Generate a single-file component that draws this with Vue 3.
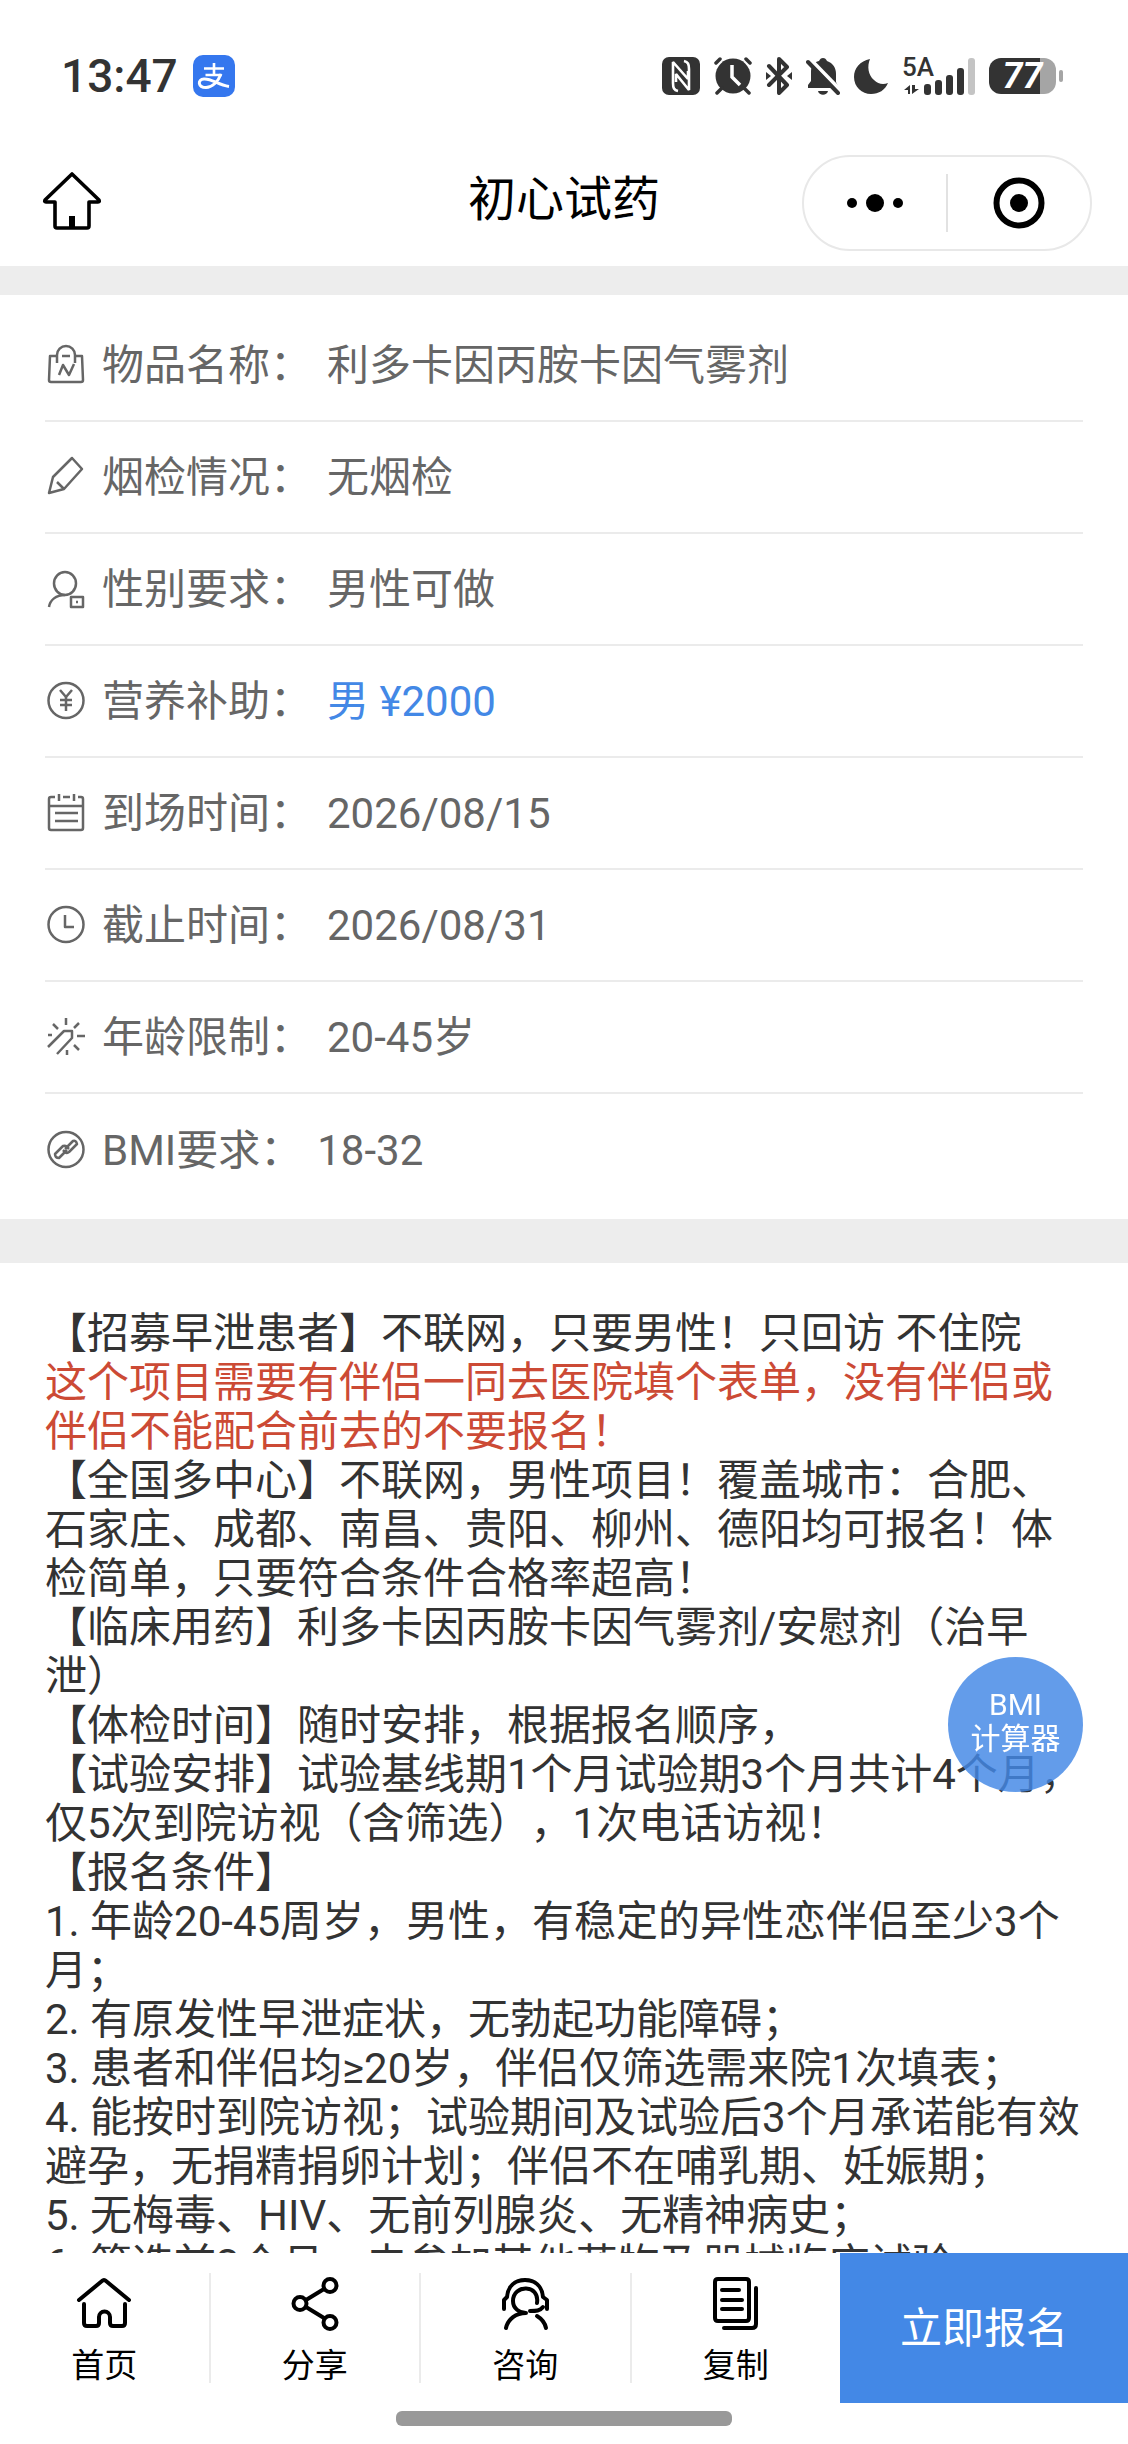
<template>
  <div class="page">
    <header class="top">
      <div class="status-bar">
        <div class="status-left">
          <span class="time">13:47</span>
          <svg class="app-badge" viewBox="0 0 42 42" aria-hidden="true">
            <rect width="42" height="42" rx="10" fill="#3577ee" />
            <g fill="none" stroke="#fff" stroke-width="2.6" stroke-linecap="butt">
              <path d="M11 13.500h20M21 8v12M12.500 20h16" />
              <path d="M28 19c-3 8-9 13.500-15 13.500-8 0-9-8-2-8.500 8-.5 14 6 25 7.500" stroke-width="3" />
            </g>
          </svg>
        </div>
        <div class="status-right">
          <svg width="38" height="38" viewBox="0 0 38 38" aria-hidden="true">
            <rect width="38" height="38" rx="7" fill="#333" />
            <g fill="none" stroke="#fff" stroke-width="2.600" stroke-linejoin="bevel">
              <path d="M16 34c-4-1-5-3-5-8V5l15 17v-8" />
              <path d="M22 4c4 1 5 3 5 8v21L14 17v8" />
            </g>
          </svg>
          <svg width="38" height="38" viewBox="0 0 38 38" aria-hidden="true">
            <circle cx="19" cy="19" r="17.500" fill="#333" />
            <g fill="none" stroke="#333" stroke-width="3.500" stroke-linecap="round">
              <path d="M2 6l4-4M36 6l-4-4M3 36l5-5M35 36l-5-5" />
            </g>
            <path d="M18 8v12l8 8" fill="none" stroke="#fff" stroke-width="3.500" />
          </svg>
          <svg width="26" height="38" viewBox="0 0 26 38" aria-hidden="true">
            <path d="M3 9l18 19-8 8V2l8 8L3 28" fill="none" stroke="#333" stroke-width="4" stroke-linejoin="round" stroke-linecap="round" />
            <path d="M0 15l5 4-5 4zM26 15l-5 4 5 4z" fill="#333" />
          </svg>
          <svg width="34" height="38" viewBox="0 0 34 38" aria-hidden="true">
            <path d="M17 1c2 0 3 1 4 3 6 2 9 7 9 13v8l3 6H2v-3l3-4v-9C5 9 8 5 13 4c1-2 2-3 4-3zM12 34h10c-1 5-9 5-10 0z" fill="#333" />
            <path d="M3 1l33 34" stroke="#fff" stroke-width="4" />
            <path d="M2 5l30 31" stroke="#333" stroke-width="4" stroke-linecap="round" />
          </svg>
          <svg width="34" height="38" viewBox="0 0 34 38" aria-hidden="true">
            <path d="M16 2C6 4 0 11 0 20c0 10 8 17 17 17 8 0 14-4 17-11-5 2-10 1-14-3-6-5-7-14-4-21z" fill="#333" />
          </svg>
          <svg class="signal" width="73" height="38" viewBox="0 0 73 38">
            <text x="0" y="19">5A</text>
            <path d="M2 33l6-5v9h-2v-4zM10 28v9l7-5h-4v-4z" fill="#333" />
            <g fill="#333">
              <rect x="22" y="27" width="7" height="11" rx="3" />
              <rect x="33" y="23" width="7" height="15" rx="3" />
              <rect x="44" y="18" width="7" height="20" rx="3" />
              <rect x="55" y="11" width="7" height="27" rx="3" />
            </g>
            <rect x="66" y="1" width="7" height="37" rx="3" fill="#c4c4c4" />
          </svg>
          <div class="battery">
            <span class="battery-body">77</span>
            <span class="battery-cap"></span>
          </div>
        </div>
      </div>

      <div class="nav-bar">
        <a class="nav-home" href="#" aria-label="首页">
          <svg width="72" height="72" viewBox="-4 -4 72 72" aria-hidden="true">
            <path d="M32 6L5 32q-1 2 1 2h9v24q0 2 2 2h30q2 0 2-2V34h9q2 0 1-2z" fill="none" stroke="#000" stroke-width="3.600" stroke-linejoin="round" />
            <path d="M32 48v11" stroke="#000" stroke-width="6" />
          </svg>
        </a>
        <h1 class="nav-title">初心试药</h1>
        <div class="capsule">
          <button type="button" aria-label="更多">
            <svg width="56" height="20" viewBox="0 0 56 20" aria-hidden="true">
              <circle cx="5" cy="10" r="5" />
              <circle cx="28" cy="10" r="9" />
              <circle cx="51" cy="10" r="5" />
            </svg>
          </button>
          <span class="capsule-line"></span>
          <button type="button" aria-label="关闭">
            <svg width="52" height="52" viewBox="0 0 52 52" aria-hidden="true">
              <circle cx="26" cy="26" r="22.500" fill="none" stroke="#000" stroke-width="6" />
              <circle cx="26" cy="26" r="9" />
            </svg>
          </button>
        </div>
      </div>
    </header>

    <main class="content">
      <dl class="info">
        <div v-for="item in infoList" :key="item.label" class="info-row">
          <dt>
            <svg class="row-icon" viewBox="0 0 42 42" aria-hidden="true">
              <path v-for="d in item.icon" :key="d" :d="d" />
            </svg>
            <span>{{ item.label }}：</span>
          </dt>
          <dd :class="{ price: item.price }">{{ item.value }}</dd>
        </div>
      </dl>

      <article class="detail">
        <p v-for="line in detail" :key="line.text" :class="{ warn: line.warn }">{{ line.text }}</p>
      </article>
    </main>

    <button class="bmi-btn" type="button">BMI<br />计算器</button>

    <footer class="bottom">
      <div class="bottom-bar">
        <nav class="tabs">
          <a v-for="tab in tabs" :key="tab.label" class="tab" href="#">
            <svg width="56" height="56" viewBox="0 0 56 56" aria-hidden="true">
              <path v-for="d in tab.icon" :key="d" :d="d" />
            </svg>
            <span>{{ tab.label }}</span>
          </a>
        </nav>
        <button class="apply" type="button">立即报名</button>
      </div>
      <div class="home-indicator"></div>
    </footer>
  </div>
</template>

<script setup>
const circle = 'M21 3a17.500 17.500 0 1 1 0 35a17.500 17.500 0 1 1 0-35z';

const infoList = [
  {
    label: '物品名称',
    value: '利多卡因丙胺卡因气雾剂',
    icon: ['M12 12H5L4 36q0 2 2 2h30q2 0 2-2L37 12h-6', 'M12 19v-8a9 9 0 0 1 18 0v8', 'M17 12h8', 'M14 31l4-10 6 10 5-11'],
  },
  {
    label: '烟检情况',
    value: '无烟检',
    icon: ['M27 2l10 11-18 20-15 4 4-16z', 'M12 26l7 7'],
  },
  {
    label: '性别要求',
    value: '男性可做',
    icon: ['M20 4a11 11.500 0 1 1 0 23a11 11.500 0 1 1 0-23z', 'M4 39c1-7 7-12 16-12', 'M26 29h12v10H26z', 'M31 34h2'],
  },
  {
    label: '营养补助',
    value: '男 ¥2000',
    price: true,
    icon: [circle, 'M15 10l6 7 6-7', 'M21 17v14', 'M15 20h12M15 25h12'],
  },
  {
    label: '到场时间',
    value: '2026/08/15',
    icon: ['M10 5H6q-2 0-2 2v29q0 2 2 2h30q2 0 2-2V7q0-2-2-2h-3', 'M18 5h7', 'M14 2v7M29 2v7', 'M4 14h34', 'M10 21h23M10 29h23'],
  },
  {
    label: '截止时间',
    value: '2026/08/31',
    icon: [circle, 'M20 11v12h9'],
  },
  {
    label: '年龄限制',
    value: '20-45岁',
    icon: ['M3 31l16-16h8v7L12 38', 'M21 2v7M34 7l-5 5M32 20h8M29 29l5 5M22 34v5M8 8l5 5M3 19h4'],
  },
  {
    label: 'BMI要求',
    value: '18-32',
    icon: [circle, 'M20 20l8-8q3-1 4 3l-8 8q-3 2-4 0l-2-2', 'M22 21l-8 8q-4 0-4-4l8-8q3-1 4 1l2 2'],
  },
];

const detail = [
  { text: '【招募早泄患者】不联网，只要男性！只回访 不住院' },
  { text: '这个项目需要有伴侣一同去医院填个表单，没有伴侣或伴侣不能配合前去的不要报名！', warn: true },
  { text: '【全国多中心】不联网，男性项目！覆盖城市：合肥、石家庄、成都、南昌、贵阳、柳州、德阳均可报名！体检简单，只要符合条件合格率超高！' },
  { text: '【临床用药】利多卡因丙胺卡因气雾剂/安慰剂（治早泄）' },
  { text: '【体检时间】随时安排，根据报名顺序，' },
  { text: '【试验安排】试验基线期1个月试验期3个月共计4个月，仅5次到院访视（含筛选），1次电话访视！' },
  { text: '【报名条件】' },
  { text: '1. 年龄20-45周岁，男性，有稳定的异性恋伴侣至少3个月；' },
  { text: '2. 有原发性早泄症状，无勃起功能障碍；' },
  { text: '3. 患者和伴侣均≥20岁，伴侣仅筛选需来院1次填表；' },
  { text: '4. 能按时到院访视；试验期间及试验后3个月承诺能有效避孕，无捐精捐卵计划；伴侣不在哺乳期、妊娠期；' },
  { text: '5. 无梅毒、HIV、无前列腺炎、无精神病史；' },
  { text: '6. 筛选前3个月，未参加其他药物及器械临床试验' },
];

const tabs = [
  {
    label: '首页',
    icon: ['M3 25L26 6q2-2 4 0l23 19', 'M8 29v19q0 3 3 3h9q3 0 3-3v-6a5.500 5.500 0 0 1 11 0v6q0 3 3 3h9q3 0 3-3V29'],
  },
  {
    label: '分享',
    icon: [
      'M43 4a6.500 6.500 0 1 1 0 13a6.500 6.500 0 1 1 0-13z',
      'M13 22a6.500 6.500 0 1 1 0 13a6.500 6.500 0 1 1 0-13z',
      'M43 41a6.500 6.500 0 1 1 0 13a6.500 6.500 0 1 1 0-13z',
      'M19 25l18-11M19 32l18 11',
    ],
  },
  {
    label: '咨询',
    icon: ['M7 34v-9l3-3C11 11 18 5 28 5s17 6 18 17l4 3v9', 'M40 28c3-19-24-19-24-2 0 7 6 12 13 12-10 0-18 6-20 15', 'M33 36c6 0 10 0 13-4', 'M40 41c5 3 8 7 9 12'],
  },
  {
    label: '复制',
    icon: ['M10 4h28q3 0 3 3v36q0 3-3 3H10q-3 0-3-3V7q0-3 3-3z', 'M14 15h17M14 25h20M14 34h20', 'M48 13v36q0 4-4 4H16'],
  },
];
</script>

<style>
body { margin: 0; background: #fff; }
</style>

<style scoped>
.page {
  display: flex;
  flex-direction: column;
  height: 100vh;
  overflow: hidden;
  background: #fff;
  color: #333;
  font-family: Roboto, 'Noto Sans CJK SC', sans-serif;
  font-size: 42px;
  line-height: 49px;
  text-spacing-trim: space-all;
  text-autospace: no-autospace;
}
button { padding: 0; border: none; background: none; font: inherit; cursor: pointer; }
a { color: inherit; text-decoration: none; }
svg { display: block; flex: none; }

/* status bar */
.top { flex: none; }
.status-bar { display: flex; justify-content: space-between; align-items: center; height: 140px; padding: 12px 65px 0 61px; box-sizing: border-box; }
.status-left { display: flex; align-items: center; gap: 15px; }
.time { font-size: 46px; line-height: 52px; font-weight: 500; }
.app-badge { width: 42px; height: 42px; }
.status-right { display: flex; align-items: center; gap: 14px; }
.signal { overflow: visible; }
.signal text { font-size: 26px; font-weight: 500; fill: #333; }
.battery { display: flex; align-items: center; gap: 3px; }
.battery-body {
  width: 67px;
  height: 36px;
  border-radius: 12px;
  background: linear-gradient(to right, #333 76%, #a5a5a5 76%);
  color: #fff;
  font-size: 36px;
  line-height: 36px;
  font-weight: 700;
  font-style: italic;
  text-align: center;
}
.battery-cap { width: 4px; height: 12px; border-radius: 2px; background: #a5a5a5; }

/* nav bar */
.nav-bar { display: grid; grid-template-columns: 1fr auto 1fr; align-items: center; height: 126px; padding: 0 36px; color: #000; }
.nav-home { justify-self: start; padding-bottom: 6px; }
.nav-title { margin: 0; padding-bottom: 6px; font-size: 48px; line-height: 60px; font-weight: 400; }
.capsule { justify-self: end; display: flex; align-items: center; width: 290px; height: 96px; box-sizing: border-box; border: 2px solid #e8e8e8; border-radius: 48px; }
.capsule button { flex: 1; display: flex; justify-content: center; }
.capsule-line { width: 2px; height: 58px; background: #e2e2e2; }

/* info list */
.content { flex: 1; min-height: 0; overflow-y: auto; scrollbar-width: none; }
.info { margin: 0; padding: 15px 45px 13px; border-top: 29px solid #ededed; border-bottom: 44px solid #ededed; color: #666; }
.info-row { display: flex; align-items: center; gap: 15px; height: 112px; box-sizing: border-box; border-bottom: 2px solid #ebebeb; }
.info-row:last-child { border-bottom: none; }
.info-row dt { display: flex; align-items: center; gap: 15px; }
.info-row dd { margin: 0; }
.info-row .price { color: #4388e6; }
.row-icon { width: 42px; height: 42px; fill: none; stroke: #666; stroke-width: 2.5; stroke-linejoin: round; }

/* detail text */
.detail { padding: 46px 45px; }
.detail p { margin: 0; }
.detail .warn { color: #cc4a35; }

.bmi-btn {
  position: fixed;
  right: 45px;
  bottom: 652px;
  width: 135px;
  height: 135px;
  padding-bottom: 6px;
  border-radius: 50%;
  background: rgba(67, 136, 230, 0.83);
  color: #fff;
  font-size: 30px;
  line-height: 34px;
}

/* bottom bar */
.bottom { flex: none; background: #fff; color: #000; }
.bottom-bar { display: flex; height: 150px; }
.tabs { flex: 1; display: flex; padding: 20px 0; }
.tab { flex: 1; display: flex; flex-direction: column; align-items: center; gap: 16px; padding-top: 2px; font-size: 33px; line-height: 38px; }
.tab + .tab { border-left: 2px solid #ebebeb; }
.tab svg { fill: none; stroke: #000; stroke-width: 4; stroke-linecap: round; stroke-linejoin: round; }
.apply { width: 288px; background: #4388e6; color: #fff; }
.home-indicator { width: 336px; height: 15px; margin: 8px auto 18px; border-radius: 6px; background: #999; }
</style>
